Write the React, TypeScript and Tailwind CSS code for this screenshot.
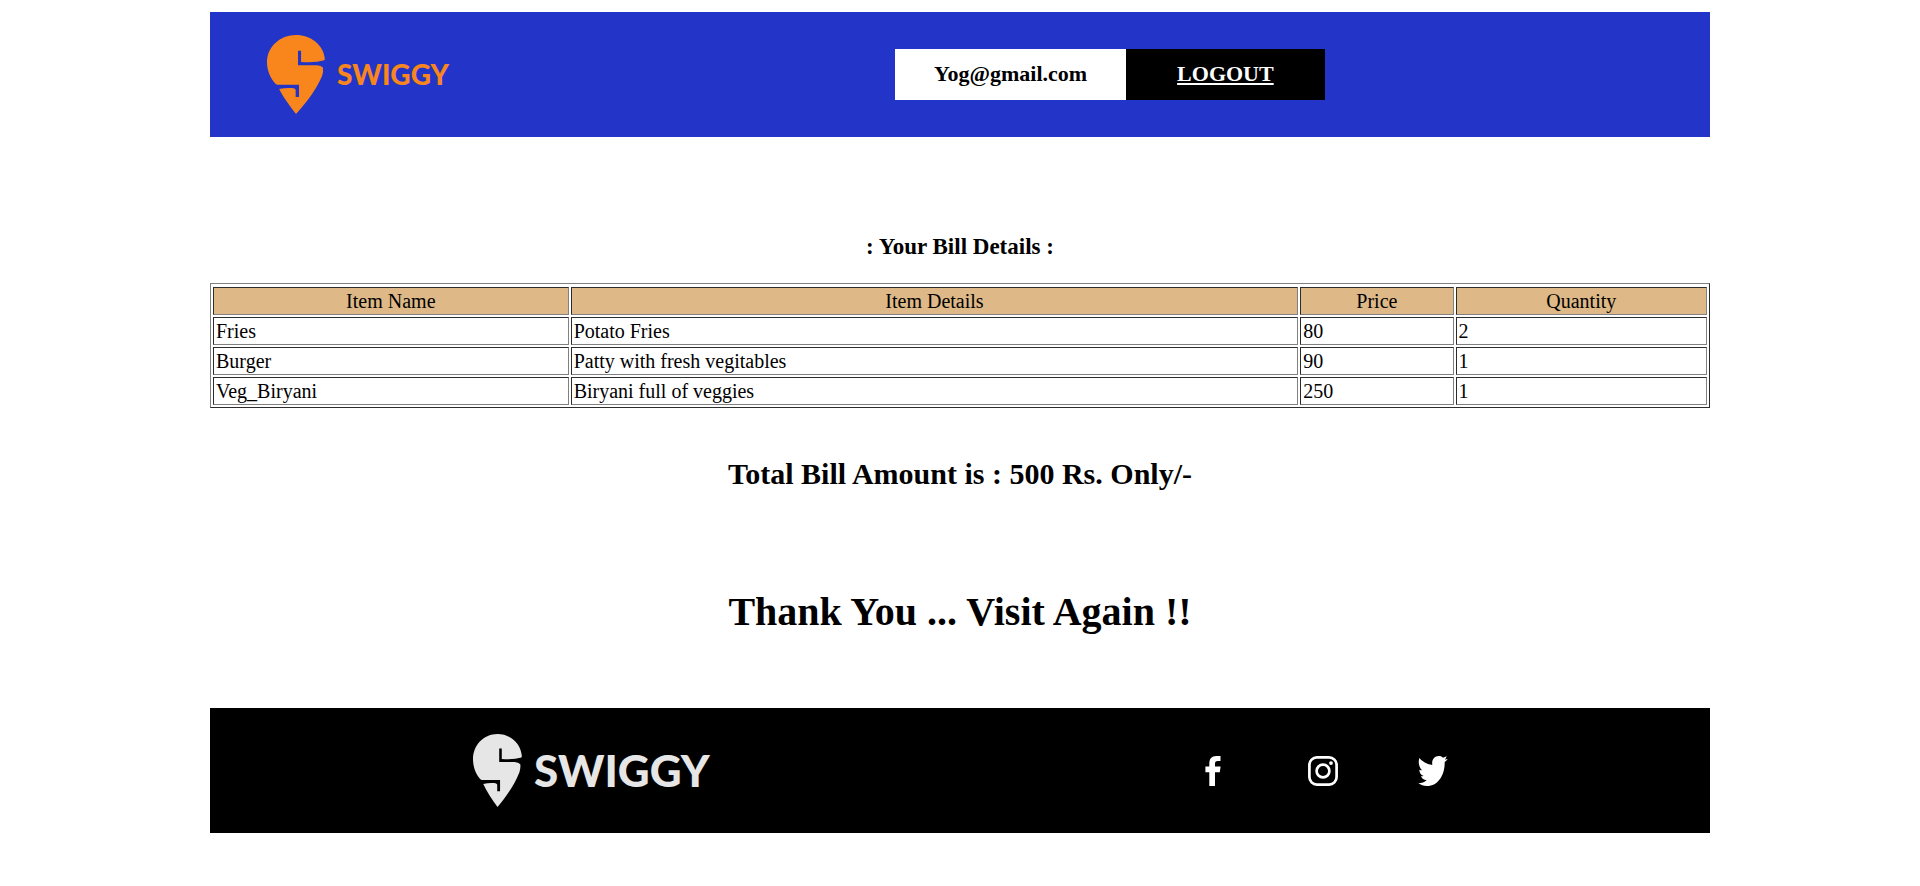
import React from "react";

const items = [
  { name: "Fries", details: "Potato Fries", price: 80, quantity: 2 },
  { name: "Burger", details: "Patty with fresh vegitables", price: 90, quantity: 1 },
  { name: "Veg_Biryani", details: "Biryani full of veggies", price: 250, quantity: 1 },
];

const columns = [
  { label: "Item Name", width: "w-[23.9%]" },
  { label: "Item Details", width: "w-[48.9%]" },
  { label: "Price", width: "w-[10.3%]" },
  { label: "Quantity", width: "w-[16.9%]" },
];

const cell = "border border-t-[#2c2c2c] border-l-[#2c2c2c] border-r-[#808080] border-b-[#808080] py-px px-0.5";

function Pin({ className }: { className: string }) {
  return (
    <svg viewBox="2 4 172 237" preserveAspectRatio="none" fill="currentColor" className={className} aria-hidden="true">
      <path d="M88 4C40 4 2 40 2 86c0 24 10 49 25 64q3 3 7 3h63v37H87v-22q-2-4-11-5-21-1-38 3c12 24 32 52 50 75 24-26 57-66 77-113q5-16 3-26-5-6-20-7H94V51h9v34q42 3 69-5 2-2 1-8C168 34 133 4 88 4Z" />
    </svg>
  );
}

export default function App() {
  return (
    <div className="mx-auto w-[78.125%] pt-3 font-['Liberation_Serif',serif] text-xl leading-6 text-black">
      <header className="flex h-[125px] bg-[#2334c8]">
        <div className="flex w-[45.67%] items-center pl-[57px] text-[#f8861d]">
          <Pin className="h-[79px] w-[58px]" />
          <span className="ml-3 pb-0.5 font-['Lato',sans-serif] text-[28px] leading-8 font-black">SWIGGY</span>
        </div>
        <div className="flex items-center text-[22px] font-bold">
          <span className="bg-white px-[39px] pt-[11px] pb-[13px] leading-[27px]">Yog@gmail.com</span>
          <a href="#logout" className="bg-black px-[51px] pt-[11px] pb-[13px] leading-[27px] text-white underline">
            LOGOUT
          </a>
        </div>
      </header>

      <main className="text-center">
        <h3 className="mt-24 text-[23px] leading-7 font-bold">: Your Bill Details :</h3>
        <table className="mt-[22px] w-full table-fixed border-separate border-spacing-[2px] border border-t-[#808080] border-l-[#808080] border-r-[#2c2c2c] border-b-[#2c2c2c] pt-px text-left">
          <thead>
            <tr className="bg-[#deb887] text-center">
              {columns.map((c) => (
                <th key={c.label} scope="col" className={`${cell} ${c.width} font-normal`}>
                  {c.label}
                </th>
              ))}
            </tr>
          </thead>
          <tbody>
            {items.map((item) => (
              <tr key={item.name}>
                <td className={cell}>{item.name}</td>
                <td className={cell}>{item.details}</td>
                <td className={cell}>{item.price}</td>
                <td className={cell}>{item.quantity}</td>
              </tr>
            ))}
          </tbody>
        </table>
        <h2 className="mt-12 text-[30px] leading-9 font-bold">Total Bill Amount is : 500 Rs. Only/-</h2>
        <h1 className="mt-24 text-[40px] leading-12 font-bold">Thank You ... Visit Again !!</h1>
      </main>

      <footer className="mt-[72px] flex h-[125px] items-center bg-black">
        <div className="flex w-[65.87%] items-center pl-[263px] text-[#e6e6e6]">
          <Pin className="h-[73px] w-[49px]" />
          <span className="ml-3 pb-0.5 font-['Lato',sans-serif] text-[44px] leading-12 font-black">SWIGGY</span>
        </div>
        <nav className="flex gap-20 text-white">
          <a href="#facebook" aria-label="Facebook">
            <svg viewBox="0 0 30 30" fill="currentColor" className="size-[30px]" aria-hidden="true">
              <path d="M11.3 30V16.3H7.4V10.6h3.9V7.8C11.3 2.8 13.6.2 18.3.1h4.2v5h-2.8c-2 0-2.7 1-2.7 2.8v2.7h5.6l-.8 5.7H17V30Z" />
            </svg>
          </a>
          <a href="#instagram" aria-label="Instagram">
            <svg viewBox="0 0 30 30" fill="none" stroke="currentColor" strokeWidth="2.7" className="size-[30px]" aria-hidden="true">
              <rect x="1.4" y="1.4" width="27.2" height="27.2" rx="7.5" />
              <circle cx="15" cy="15" r="6.4" />
              <circle cx="23" cy="7.1" r="1.9" fill="currentColor" stroke="none" />
            </svg>
          </a>
          <a href="#twitter" aria-label="Twitter">
            <svg viewBox="0 0 90 90" fill="currentColor" className="size-[30px]" aria-hidden="true">
              <path d="M4 6C14 17 27 25 43 27 40 11 50 0 62 0c6 0 10 2 13 5q6-1 11-4-2 7-6 10 5-1 9-2-4 6-9 9C81 55 61 90 27 90 17 90 8 87 1 82q15 0 25-9-13-2-17-13 4 1 8 0C8 56 4 50 4 41q4 2 8 2C3 34 0 20 4 6Z" />
            </svg>
          </a>
        </nav>
      </footer>
    </div>
  );
}
